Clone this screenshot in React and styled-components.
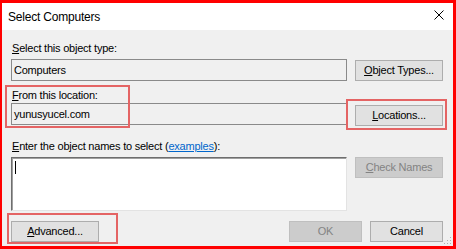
import React from "react";
import styled, { createGlobalStyle } from "styled-components";

const Global = createGlobalStyle`
  html, body { margin: 0; padding: 0; background: #fff; }
  body { font-family: "Liberation Sans", Arial, sans-serif; font-size: 11px; letter-spacing: -0.22px; color: #000; }
  * { box-sizing: border-box; }
`;

const Frame = styled.div`
  position: relative;
  width: 456px;
  height: 249px;
  border-style: solid;
  border-color: #ff0000;
  border-width: 3px 3px 3px 2px;
  display: flex;
  flex-direction: column;
  background: #f0f0f0;
`;

const TitleBar = styled.div`
  height: 27px;
  background: #ffffff;
  display: flex;
  align-items: center;
  justify-content: space-between;
  padding: 0 9px 0 6px;
`;

const Title = styled.span`
  font-size: 12px;
  letter-spacing: -0.2px;
  line-height: 16px;
  color: #000;
`;

const CloseIcon = styled.svg`
  width: 10px;
  height: 10px;
  align-self: flex-start;
  margin-top: 7px;
`;

const Body = styled.div`
  flex: 1;
  display: flex;
  flex-direction: column;
  padding: 11px 10px 0 9px;
`;

const Label = styled.div`
  line-height: 15px;
  height: 15px;
  margin-top: ${(p) => p.$mt || 0}px;
  margin-bottom: ${(p) => p.$mb || 0}px;
  white-space: nowrap;
  padding-left: 1px;
`;

const Row = styled.div`
  display: grid;
  grid-template-columns: 336px 88px;
  column-gap: 8px;
  align-items: start;
`;

const ReadField = styled.div`
  height: 22px;
  border: 1px solid #8a8a8a;
  background: #f0f0f0;
  padding: 0 2px;
  display: flex;
  align-items: center;
  line-height: 15px;
`;

const MultiField = styled.div`
  height: 54px;
  background: #fff;
  border-style: solid;
  border-width: 1px;
  border-color: #6e6e6e #e3e3e3 #e3e3e3 #6e6e6e;
  box-shadow: inset 1px 1px 0 #a0a0a0;
  padding: 3px 2px;
`;

const Caret = styled.div`
  width: 1px;
  height: 13px;
  background: #000;
  margin-left: 1px;
`;

const Button = styled.div`
  height: ${(p) => p.$h || 21}px;
  width: ${(p) => p.$w || 88}px;
  margin-top: ${(p) => p.$mt || 0}px;
  border: 1px solid ${(p) => (p.$disabled ? "#bfbfbf" : "#adadad")};
  background: ${(p) => (p.$disabled ? "#cccccc" : "#e1e1e1")};
  color: ${(p) => (p.$disabled ? "#838383" : "#000")};
  display: flex;
  align-items: center;
  justify-content: center;
  line-height: 15px;
  white-space: nowrap;
`;

const Link = styled.span`
  color: #0066cc;
  text-decoration: underline;
`;

const Footer = styled.div`
  display: flex;
  align-items: center;
  gap: 8px;
  margin-top: 10px;
`;

const Spacer = styled.div`
  flex: 1;
`;

const Annotation = styled.div`
  position: absolute;
  left: ${(p) => p.$x}px;
  top: ${(p) => p.$y}px;
  width: ${(p) => p.$w}px;
  height: ${(p) => p.$h}px;
  border: 2px solid #e46464;
  pointer-events: none;
`;

const Grip = styled.svg`
  position: absolute;
  right: 1px;
  bottom: 1px;
  width: 8px;
  height: 8px;
`;

export default function App() {
  return (
    <>
      <Global />
      <Frame>
        <TitleBar>
          <Title>Select Computers</Title>
          <CloseIcon viewBox="0 0 10 10">
            <path d="M0.5 0.5 L9.5 9.5 M9.5 0.5 L0.5 9.5" stroke="#000" strokeWidth="1" fill="none" />
          </CloseIcon>
        </TitleBar>
        <Body>
          <Label $mb={3}>
            <u>S</u>elect this object type:
          </Label>
          <Row>
            <ReadField>Computers</ReadField>
            <Button $mt={1}>
              <u>O</u>bject Types...
            </Button>
          </Row>
          <Label $mt={7}>
            <u>F</u>rom this location:
          </Label>
          <Row>
            <ReadField>yunusyucel.com</ReadField>
            <Button $mt={2}>
              <u>L</u>ocations...
            </Button>
          </Row>
          <Label $mt={13} $mb={3}>
            <u>E</u>nter the object names to select (<Link>examples</Link>):
          </Label>
          <Row>
            <MultiField>
              <Caret />
            </MultiField>
            <Button $disabled>
              <u>C</u>heck Names
            </Button>
          </Row>
          <Footer>
            <Button $w={88}>
              <u>A</u>dvanced...
            </Button>
            <Spacer />
            <Button $w={73} $disabled>
              OK
            </Button>
            <Button $w={73}>Cancel</Button>
          </Footer>
        </Body>
        <Annotation $x={3} $y={82} $w={125} $h={43} />
        <Annotation $x={344} $y={96} $w={101} $h={31} />
        <Annotation $x={5} $y={210} $w={111} $h={31} />
        <Grip viewBox="0 0 8 8">
          <rect x="6" y="0" width="1" height="1" fill="#b0b0b0" />
          <rect x="3" y="3" width="1" height="1" fill="#b0b0b0" />
          <rect x="6" y="3" width="1" height="1" fill="#b0b0b0" />
          <rect x="0" y="6" width="1" height="1" fill="#b0b0b0" />
          <rect x="3" y="6" width="1" height="1" fill="#b0b0b0" />
          <rect x="6" y="6" width="1" height="1" fill="#b0b0b0" />
        </Grip>
      </Frame>
    </>
  );
}
